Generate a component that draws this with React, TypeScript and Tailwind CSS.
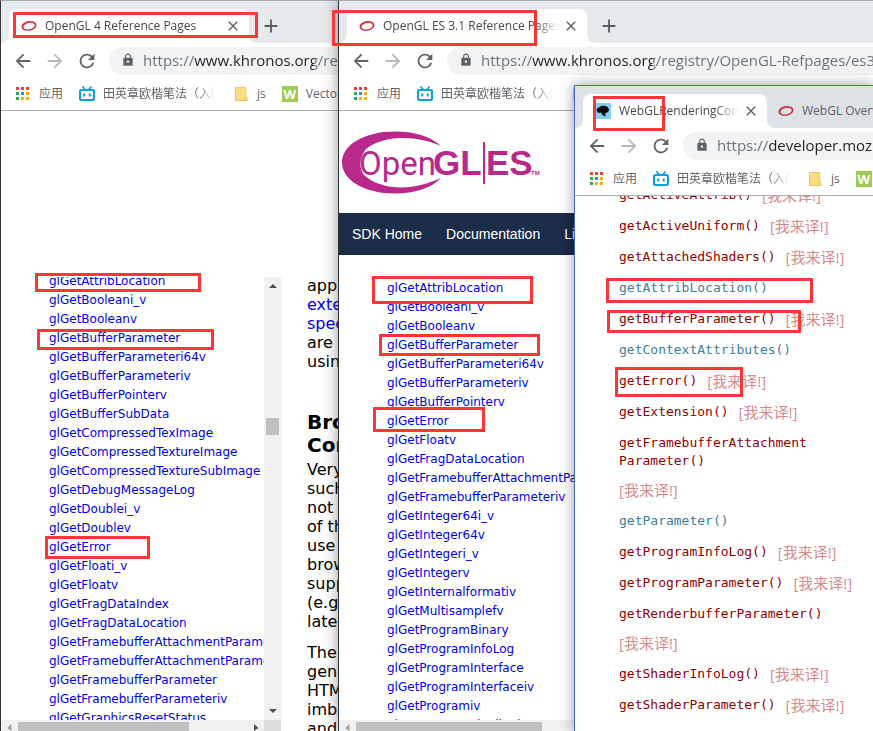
import React from "react";
import {
  MdAdd,
  MdArrowBack,
  MdArrowForward,
  MdClose,
  MdLock,
  MdRefresh,
} from "react-icons/md";

const UI_FONT =
  "font-['Open_Sans','Noto_Sans_CJK_SC',sans-serif]";

function KhronosIcon() {
  return (
    <svg viewBox="0 0 16 16" className="size-4 shrink-0" aria-hidden="true">
      <path
        d="M.6 9.500C0 5.800 4.500 2.800 9.500 3c4.300.2 6.600 2.300 5.800 5-.9 3-5 5-9.300 4.700C3 12.500 1 11.500.6 9.500Zm2 .1c.6 1.600 2.400 2 4.400 1.800 3.500-.3 6.300-2 6.700-4 .3-1.700-1.500-2.800-4.300-2.700-4 .1-7.400 2.500-6.800 4.900Z"
        fill="#cb3340"
      />
    </svg>
  );
}

function MdnIcon() {
  return (
    <svg viewBox="0 0 16 16" className="size-4 shrink-0" aria-hidden="true">
      <rect width="16" height="16" fill="#83d0f2" />
      <path
        d="M1.500 7 2.500 5l2-.8L6 3l3-.3 3 .8 1.500 1.700L14 7.500l-1.500 2-1.700.3-.8 1.700 1.200 1.700-2.200-.2-1-1-1-.3-.5-1.700L5 9.500l-1 .6-1.500-.8Z"
        fill="#0b0b0b"
      />
    </svg>
  );
}

function AppsIcon() {
  const colors = ["#ea4335", "#ea4335", "#ea4335", "#34a853", "#2a8bf2", "#fbac05", "#34a853", "#fbac05", "#fbac05"];
  return (
    <svg viewBox="0 0 16 16" className="size-4 shrink-0" aria-hidden="true">
      {colors.map((fill, i) => (
        <rect key={i} x={1 + (i % 3) * 5} y={1 + Math.floor(i / 3) * 5} width="3" height="3" fill={fill} />
      ))}
    </svg>
  );
}

function BilibiliIcon() {
  return (
    <svg viewBox="0 0 16 16" className="size-4 shrink-0" aria-hidden="true">
      <path d="m4 1 2 2.500M12 1l-2 2.500" stroke="#0c9fd8" strokeWidth="1.800" strokeLinecap="round" />
      <rect x="1" y="4" width="14" height="10" rx="1.500" fill="#fff" stroke="#0c9fd8" strokeWidth="2.200" />
      <path d="M5.300 7.500v3M10.700 7.500v3" stroke="#0c9fd8" strokeWidth="2" />
    </svg>
  );
}

function FolderIcon() {
  return (
    <svg viewBox="0 0 16 16" className="size-4 shrink-0" aria-hidden="true">
      <path d="M2.500 1.500h10.300V11l1 1v2.500H2.500Z" fill="#fbdc80" stroke="#ecc55c" />
      <path d="M11.500 14.500v-3.200l1.300-1 1 1.400v2.800Z" fill="#fdeab0" stroke="#e5b94a" strokeWidth=".8" />
    </svg>
  );
}

function WIcon() {
  return (
    <span className="flex size-4 shrink-0 items-center justify-center bg-[#9ccc56] text-[13px] leading-4 font-bold text-white">
      W
    </span>
  );
}

function Bookmarks() {
  const item = "flex shrink-0 items-center gap-2";
  return (
    <nav className="flex h-[31px] items-center gap-4 overflow-hidden pb-0.5 pl-3.5 text-xs whitespace-nowrap text-[#5f6368]">
      <a href="#apps" className={item}>
        <AppsIcon />
        应用
      </a>
      <a href="#bili" className={item}>
        <BilibiliIcon />
        <span className="w-[114px] overflow-hidden [mask-image:linear-gradient(to_right,black_80%,transparent_99%)]">
          田英章欧楷笔法（入门）
        </span>
      </a>
      <a href="#js" className={item}>
        <FolderIcon />
        js
      </a>
      <a href="#vector" className={item}>
        <WIcon />
        Vector
      </a>
    </nav>
  );
}

function TabFoot({ side }: { side: "left" | "right" }) {
  return (
    <svg
      viewBox="0 0 8 8"
      aria-hidden="true"
      className={side === "left" ? "absolute right-full bottom-0 size-2" : "absolute bottom-0 left-full size-2"}
    >
      <path d={side === "left" ? "M8 0v8H0a8 8 0 0 0 8-8Z" : "M0 0v8h8a8 8 0 0 1-8-8Z"} fill="#fff" />
    </svg>
  );
}

interface WindowProps {
  place: string;
  edge: string;
  strip: string;
  tabWidth: string;
  icon: React.ReactNode;
  title: string;
  afterTab: React.ReactNode;
  url: string;
  urlColors: string;
  children: React.ReactNode;
}

function BrowserWindow(p: WindowProps) {
  const tool = "flex h-7 w-8 items-center justify-center text-[#5f6368]";
  return (
    <section
      className={`absolute right-0 bottom-0 flex flex-col overflow-hidden border-t border-l bg-white shadow-[0_0_14px_rgba(0,0,0,0.4)] ${p.place} ${p.edge}`}
    >
      <header className={`shrink-0 border-b border-[#aeaeae] ${UI_FONT}`}>
        <div className={`flex h-[42px] items-end overflow-hidden pl-2 ${p.strip}`}>
          <div className={`relative flex h-[34px] shrink-0 items-center rounded-t-lg bg-white pr-2 pl-3 ${p.tabWidth}`}>
            <TabFoot side="left" />
            {p.icon}
            <span className="mr-1 ml-2 min-w-0 flex-1 overflow-hidden text-xs whitespace-nowrap text-[#45484c] [mask-image:linear-gradient(to_left,transparent,black_24px)]">
              {p.title}
            </span>
            <button type="button" aria-label="Close tab" className="text-[#5a5d61]">
              <MdClose size={16} />
            </button>
            <TabFoot side="right" />
          </div>
          {p.afterTab}
        </div>
        <div className="flex h-9 items-center pl-1.5">
          <button type="button" aria-label="Back" className={tool}>
            <MdArrowBack size={22} />
          </button>
          <button type="button" aria-label="Forward" className={`${tool} opacity-45`}>
            <MdArrowForward size={22} />
          </button>
          <button type="button" aria-label="Reload" className={tool}>
            <MdRefresh size={22} />
          </button>
          <label className="ml-1.5 flex h-7 min-w-0 flex-1 items-center gap-2 rounded-l-full bg-[#f1f3f4] pb-0.5 pl-3 text-[#5f6368]">
            <MdLock size={14} className="shrink-0" />
            <input
              aria-label="Address"
              defaultValue={p.url}
              className={`min-w-0 flex-1 bg-clip-text text-[15px] text-transparent outline-none ${p.urlColors}`}
            />
          </label>
        </div>
        <Bookmarks />
      </header>
      {p.children}
    </section>
  );
}

function NewTab() {
  return (
    <button type="button" aria-label="New tab" className="ml-[11px] flex h-[34px] items-center text-[#5a5d61]">
      <MdAdd size={22} />
    </button>
  );
}

function HScroll({ thumb, end }: { thumb: string; end: boolean }) {
  return (
    <div className="flex h-[11px] shrink-0 items-end bg-[#f1f1f1]">
      <svg viewBox="0 0 17 9" className="h-[9px] w-[17px] shrink-0" aria-hidden="true">
        <path d="M10.500 2v7L6 6Z" fill="#a3a3a3" />
      </svg>
      <div className={`h-[9px] bg-[#c1c1c1] ${thumb}`} />
      {end && (
        <svg viewBox="0 0 17 9" className="ml-auto h-[9px] w-[17px]" aria-hidden="true">
          <path d="M7 2v7l4.500-3Z" fill="#505050" />
        </svg>
      )}
    </div>
  );
}

function LinkList({ names, className }: { names: string[]; className: string }) {
  return (
    <ul className={`text-[12px] leading-[19px] whitespace-nowrap text-[#0000ee] ${className}`}>
      {names.map((n) => (
        <li key={n}>
          <a href={`#${n}`}>{n}</a>
        </li>
      ))}
    </ul>
  );
}

const gl4 = [
  "glGetAttribLocation", "glGetBooleani_v", "glGetBooleanv", "glGetBufferParameter",
  "glGetBufferParameteri64v", "glGetBufferParameteriv", "glGetBufferPointerv", "glGetBufferSubData",
  "glGetCompressedTexImage", "glGetCompressedTextureImage", "glGetCompressedTextureSubImage",
  "glGetDebugMessageLog", "glGetDoublei_v", "glGetDoublev", "glGetError", "glGetFloati_v", "glGetFloatv",
  "glGetFragDataIndex", "glGetFragDataLocation", "glGetFramebufferAttachmentParameter",
  "glGetFramebufferAttachmentParameteriv", "glGetFramebufferParameter", "glGetFramebufferParameteriv",
  "glGetGraphicsResetStatus",
];

const es31 = [
  "glGetAttribLocation", "glGetBooleani_v", "glGetBooleanv", "glGetBufferParameter",
  "glGetBufferParameteri64v", "glGetBufferParameteriv", "glGetBufferPointerv", "glGetError", "glGetFloatv",
  "glGetFragDataLocation", "glGetFramebufferAttachmentParameteriv", "glGetFramebufferParameteriv",
  "glGetInteger64i_v", "glGetInteger64v", "glGetIntegeri_v", "glGetIntegerv", "glGetInternalformativ",
  "glGetMultisamplefv", "glGetProgramBinary", "glGetProgramInfoLog", "glGetProgramInterface",
  "glGetProgramInterfaceiv", "glGetProgramiv", "glGetProgramPipelineiv",
];

type Mdn = { lines: string[]; state: "done" | "inline" | "below" };

const webgl: Mdn[] = [
  { lines: ["getActiveAttrib()"], state: "inline" },
  { lines: ["getActiveUniform()"], state: "inline" },
  { lines: ["getAttachedShaders()"], state: "inline" },
  { lines: ["getAttribLocation()"], state: "done" },
  { lines: ["getBufferParameter()"], state: "inline" },
  { lines: ["getContextAttributes()"], state: "done" },
  { lines: ["getError()"], state: "inline" },
  { lines: ["getExtension()"], state: "inline" },
  { lines: ["getFramebufferAttachment", "Parameter()"], state: "below" },
  { lines: ["getParameter()"], state: "done" },
  { lines: ["getProgramInfoLog()"], state: "inline" },
  { lines: ["getProgramParameter()"], state: "inline" },
  { lines: ["getRenderbufferParameter()"], state: "below" },
  { lines: ["getShaderInfoLog()"], state: "inline" },
  { lines: ["getShaderParameter()"], state: "inline" },
];

function Translate() {
  return (
    <span className="font-['Open_Sans','Noto_Sans_CJK_SC',sans-serif] text-[15px] text-[#d58c8d]">
      [我来译!]
    </span>
  );
}

function MdnItem({ item }: { item: Mdn }) {
  return (
    <li className={item.state === "done" ? "text-[#3d7e9a]" : "text-[#900000]"}>
      <a href={`#${item.lines[0]}`} className="flex items-center gap-2.5 leading-[18px]">
        <code className="font-['DejaVu_Sans_Mono',monospace] text-[13px]">
          {item.lines.map((l) => (
            <span key={l} className="block">
              {l}
            </span>
          ))}
        </code>
        {item.state === "inline" && <Translate />}
      </a>
      {item.state === "below" && (
        <p className="mt-3 leading-[17px]">
          <Translate />
        </p>
      )}
    </li>
  );
}

function EsLogo() {
  return (
    <svg viewBox="0 0 200 66" className="h-[66px] w-[200px]" role="img" aria-label="OpenGL ES">
      <path
        d="M99 15C88 5 72 .5 53 .5 22 .5 0 14 0 31.500S22 62.500 53 62.500C72 62.500 90 57 99 47 85 53 72 56.500 60 56.500 45 56.500 30 52 22 44 17 38 17 26 24 18 33 11 45 7 60 7 75 7 88 10 99 15Z"
        fill="#b9298c"
      />
      <g fill="#b9298c">
        <text x="17" y="44" className="font-[Roboto,sans-serif] text-[33px]">
          Open
        </text>
        <text x="91" y="44" className="font-['Liberation_Sans',sans-serif] text-[35px] font-bold">
          GL
        </text>
        <rect x="141" y="11" width="2" height="42" />
        <text x="144" y="44" className="font-['Liberation_Sans',sans-serif] text-[35px] font-bold">
          ES
        </text>
        <text x="189" y="44" className="font-['Liberation_Sans',sans-serif] text-[6px] font-bold">
          TM
        </text>
      </g>
    </svg>
  );
}

const marks = [
  "left-[13px] top-3 h-[26px] w-[245px]",
  "left-[332px] top-2.5 h-9 w-[205px]",
  "left-[593px] top-24 h-[35px] w-[72px]",
  "left-[35px] top-[273px] h-[19px] w-[166px]",
  "left-[37px] top-[329px] h-[21px] w-[177px]",
  "left-[45px] top-[536px] h-[23px] w-[105px]",
  "left-[372px] top-[276px] h-7 w-[161px]",
  "left-[379px] top-[334px] h-[22px] w-[161px]",
  "left-[373px] top-[407px] h-[25px] w-28",
  "left-[606px] top-[278px] h-[25px] w-[207px]",
  "left-[607px] top-[310px] h-[23px] w-[194px]",
  "left-[615px] top-[367px] h-[30px] w-32",
];

export default function App() {
  return (
    <div className="relative h-screen w-full overflow-hidden bg-white font-['DejaVu_Sans',sans-serif]">
      <BrowserWindow
        place="top-0 left-0"
        edge="border-t-[#a9a9a9] border-l-[#333]"
        strip="bg-[#e7eaed]"
        tabWidth="w-60"
        icon={<KhronosIcon />}
        title="OpenGL 4 Reference Pages"
        afterTab={<NewTab />}
        url="https://www.khronos.org/registry/OpenGL-Refpages/gl4/"
        urlColors="bg-[linear-gradient(to_right,#6b6f74_51px,#202124_51px,#202124_171px,#6b6f74_171px)]"
      >
        <div className="flex min-h-0 flex-1">
          <div className="mt-[166px] flex w-[280px] shrink-0 flex-col">
            <div className="flex min-h-0 flex-1">
              <div className="min-w-0 flex-1 overflow-hidden">
                <LinkList names={gl4} className="-mt-[5px] pl-12" />
              </div>
              <div className="flex w-[17px] flex-col items-center bg-[#f1f1f1] py-1">
                <svg viewBox="0 0 8 10" className="h-2.5 w-2" aria-hidden="true">
                  <path d="M0 7 4 3l4 4Z" fill="#505050" />
                </svg>
                <div className="mt-[127px] h-[17px] w-[13px] bg-[#c1c1c1]" />
                <svg viewBox="0 0 8 10" className="mt-auto h-2.5 w-2" aria-hidden="true">
                  <path d="M0 3h8L4 7Z" fill="#505050" />
                </svg>
              </div>
            </div>
            <div className="flex">
              <div className="min-w-0 flex-1">
                <HScroll thumb="w-[171px]" end />
              </div>
              <div className="w-[17px] bg-[#dcdcdc]" />
            </div>
          </div>
          <article className="mt-[165px] ml-[26px] h-[455px] overflow-hidden text-base leading-[19px] whitespace-nowrap text-black">
            <p>
              applications,
              <br />
              <a href="#ext" className="text-[#0000ee]">
                extensions and
                <br />
                specifications
              </a>
              <br />
              are written
              <br />
              using
            </p>
            <h2 className="mt-10 text-xl leading-[23px] font-bold">
              Browser
              <br />
              Compatibility
            </h2>
            <p className="mt-[3px]">
              Very old
              <br />
              such as
              <br />
              not all
              <br />
              of these
              <br />
              use the
              <br />
              browser
              <br />
              support
              <br />
              (e.g. the
              <br />
              latest)
            </p>
            <p className="mt-3">
              The pages
              <br />
              generate
              <br />
              HTML
              <br />
              imbedded
              <br />
              and
            </p>
          </article>
        </div>
      </BrowserWindow>

      <BrowserWindow
        place="top-0 left-[338px]"
        edge="border-t-[#a9a9a9] border-l-[#333]"
        strip="bg-[#e7eaed]"
        tabWidth="w-60"
        icon={<KhronosIcon />}
        title="OpenGL ES 3.1 Reference Pages"
        afterTab={<NewTab />}
        url="https://www.khronos.org/registry/OpenGL-Refpages/es3.1/"
        urlColors="bg-[linear-gradient(to_right,#6b6f74_51px,#202124_51px,#202124_171px,#6b6f74_171px)]"
      >
        <div className="px-[3px] pt-5 pb-4">
          <EsLogo />
        </div>
        <nav className="flex h-[42px] shrink-0 items-center gap-6 bg-[#1c2d49] pl-[13px] font-['Liberation_Sans',sans-serif] text-sm text-white">
          <a href="#home">SDK Home</a>
          <a href="#docs">Documentation</a>
          <a href="#libs">Libraries</a>
        </nav>
        <div className="mt-6 min-h-0 flex-1 overflow-hidden">
          <LinkList names={es31} className="pl-12" />
        </div>
        <HScroll thumb="w-[186px]" end={false} />
      </BrowserWindow>

      <BrowserWindow
        place="top-[85px] left-[574px]"
        edge="border-[#4469c9]"
        strip="bg-[#dee1e6]"
        tabWidth="w-46"
        icon={<MdnIcon />}
        title="WebGLRenderingContext"
        afterTab={
          <div className="ml-[11px] flex h-[34px] shrink-0 items-center gap-2 text-xs whitespace-nowrap text-[#5f6368]">
            <KhronosIcon />
            WebGL Overview
          </div>
        }
        url="https://developer.mozilla.org/zh-CN/docs/Web/API"
        urlColors="bg-[linear-gradient(to_right,#6b6f74_51px,#202124_51px)]"
      >
        <div className="min-h-0 flex-1 overflow-hidden">
          <ul className="-mt-[10px] flex flex-col gap-[13px] pl-11 whitespace-nowrap">
            {webgl.map((item) => (
              <MdnItem key={item.lines[0]} item={item} />
            ))}
          </ul>
        </div>
      </BrowserWindow>

      {marks.map((m) => (
        <div key={m} className={`pointer-events-none absolute border-3 border-[#fa3638] ${m}`} />
      ))}
    </div>
  );
}
